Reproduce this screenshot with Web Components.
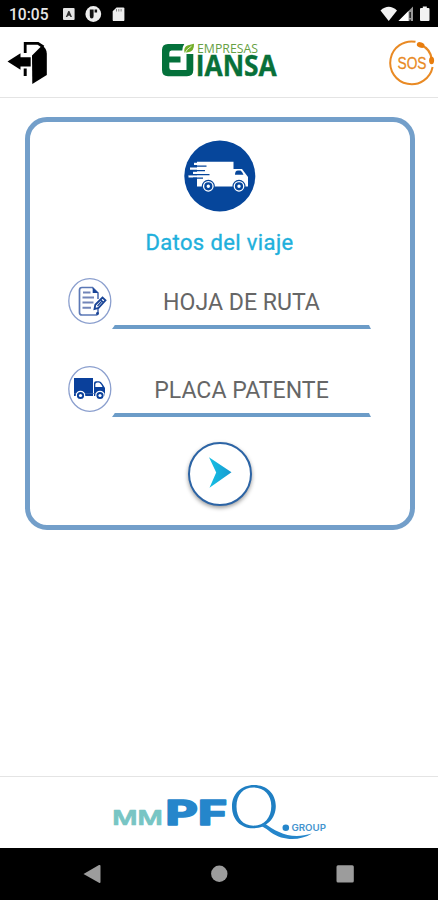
<!DOCTYPE html>
<html lang="es">
<head>
<meta charset="utf-8">
<title>Datos del viaje</title>
<style>
html,body{margin:0;height:100%;background:#fff;font-family:Roboto,sans-serif}
</style>
</head>
<body>
<trip-app></trip-app>
<script>
const define = (name, markup) => {
  const t = document.createElement('template');
  t.innerHTML = markup;
  customElements.define(name, class extends HTMLElement {
    constructor() {
      super();
      this.attachShadow({ mode: 'open' }).append(t.content.cloneNode(true));
    }
  });
};

define('status-bar', `
<style>
:host{display:flex;align-items:center;height:27px;background:#000;color:#e6e6e6;flex:none;box-sizing:border-box;padding:0 7px 0 5px}
svg{display:block}
.clock{flex:none}
.right{margin-left:auto}
</style>
<svg class="clock" width="48" height="27" viewBox="5 0 48 27"><text x="9" y="20.3" font-size="16.5" textLength="39.5" lengthAdjust="spacingAndGlyphs" fill="#e6e6e6" font-weight="500">10:05</text></svg>
<svg width="80" height="27" viewBox="53 0 80 27">
  <rect x="63" y="8" width="11.6" height="12" rx="1" fill="#e4e4e4"/>
  <path d="M65.8 17 68.3 11h1.1L72 17h-1.6l-.5-1.3h-2L67.3 17Z" fill="#333"/>
  <circle cx="93.3" cy="14" r="7.9" fill="#eee"/>
  <path d="M89.8 9.5h3.8v6.5q0 2.5-1.9 2.5t-1.9-2.5Z" fill="#111"/>
  <path d="M94.6 9.5h2.5v3h-2.5Z" fill="#111"/>
  <path d="M116.5 7.4h6.700q1.200 0 1.200 1.200v11.300q0 1.200-1.200 1.200h-9.300q-1.200 0-1.200-1.200v-8.700Z" fill="#eee"/>
  <path d="M116.500 9v2.500M118.800 9v2.500M121.100 9v2.500" stroke="#777" stroke-width=".9"/>
</svg>
<svg class="right" width="54" height="27" viewBox="377 0 54 27">
  <path d="M380.500 10.500Q388.700 3 397 10.500L388.700 21Z" fill="#f2f2f2"/>
  <path d="M413 6.500V21H398.500Z" fill="#999"/>
  <path d="M408.500 11v10h-10Z" fill="#fff"/><path d="M410.200 12v6M410.200 19.500v1.500" stroke="#222" stroke-width="1.500"/>
  <path d="M421 8h1.800V6.500h4V8h1.700q1 0 1 1v11q0 1-1 1H421q-1 0-1-1V9q0-1 1-1Z" fill="#f2f2f2"/>
</svg>`);

define('app-header', `
<style>
:host{display:flex;height:71px;flex:none;box-sizing:border-box;border-bottom:1px solid #e4e4e4;background:#fff;justify-content:space-between}
svg{display:block}
</style>
<svg width="60" height="70" viewBox="0 27 60 70">
  <path d="M25.200 53V43.400H38L43.500 47" fill="none" stroke="#000" stroke-width="2.800"/>
  <path d="M25.200 68.500V76" stroke="#000" stroke-width="3"/>
  <path d="M7.500 61.500 20.500 53.300V57.200H30.700V66.500H20.500V69.800Z"/>
  <path d="M32 55.500 42 45.500Q46.500 48 46.800 53.500V75L32.300 84Z"/>
</svg>
<svg width="130" height="70" viewBox="154 27 130 70">
  <path d="M184.300 44H168Q162 44 162 50V70Q162 76.200 168 76.200H187Q193.300 76.200 193.300 70V54H186.500V70H171.500Q169.300 70 169.300 67.500V62.500H180.500V56.500H169.300V53Q169.300 50.400 171.500 50.400H182.300Q182.500 46.500 184.300 44Z" fill="#04713b"/>
  <path d="M184.500 52.800Q183.200 47 188 45.300L194 43.800Q194.400 52 188 52.200Z" fill="#72ae28"/><path d="M184.300 54Q187 48.500 191.500 46.200" fill="none" stroke="#fff" stroke-width=".8"/>
  <text x="197" y="52.500" font-family="Open Sans,Noto Sans,sans-serif" font-size="11.800" textLength="61" lengthAdjust="spacingAndGlyphs" fill="#66a043">EMPRESAS</text>
  <text x="195.800" y="76" font-family="Open Sans,Noto Sans,sans-serif" font-weight="700" font-size="28" textLength="81" lengthAdjust="spacingAndGlyphs" fill="#087039" stroke="#087039" stroke-width=".4">IANSA</text>
</svg>
<svg width="60" height="70" viewBox="378 27 60 70">
  <path d="M415.500 41.800A21.400 21.400 0 1 0 432.600 67" fill="none" stroke="#e98a24" stroke-width="2"/>
  <path d="M421.500 45.200Q430.500 49 431.800 59.500" fill="none" stroke="#e98a24" stroke-width="2.300"/>
  <ellipse cx="420.700" cy="45" rx="4" ry="2.600" transform="rotate(20 420.700 45)" fill="#e87d0e"/>
  <ellipse cx="431.600" cy="60.500" rx="2.500" ry="3.700" fill="#e87d0e"/>
  <text x="397.500" y="69" font-family="Liberation Sans,sans-serif" font-size="16.800" textLength="29" lengthAdjust="spacingAndGlyphs" fill="#e98a24" stroke="#e98a24" stroke-width=".3">SOS</text>
</svg>`);

define('trip-field', `
<style>
:host{display:grid;grid-template-columns:44px 259px;height:53px}
.line{box-sizing:border-box;height:51.500px;border-bottom:4px solid #6c9cc8;clip-path:polygon(0 0,100% 0,99.300% 93%,100% 100%,0 100%,1% 93%);color:#666;font-size:23.100px;line-height:49px;text-align:center;white-space:nowrap}
</style>
<slot name="icon"></slot>
<div class="line"><slot></slot></div>`);

define('go-button', `
<style>
:host{display:block;width:64px;height:64px;box-sizing:border-box;border:2.200px solid #2c64a5;border-radius:50%;background:#fff;box-shadow:0 2px 4px #0006}
svg{display:block}
</style>
<svg width="60" height="60" viewBox="189.500 444.200 60 60"><defs><linearGradient id="a"><stop stop-color="#16c0e4"/><stop offset="1" stop-color="#1799d0"/></linearGradient></defs><path d="M208.500 457.500 231 472.500 209 488 215.700 472.800Z" fill="url(#a)"/></svg>`);

define('trip-card', `
<style>
:host{display:flex;flex-direction:column;align-items:center;box-sizing:border-box;width:390px;height:413px;margin:18.500px 0 0 24.500px;border:5.500px solid #739fca;border-radius:22px;background:#fff;padding-top:18.500px;flex:none}
svg{display:block}
h1{margin:14.500px 0 0;font-size:22px;line-height:32px;font-weight:400;color:#1fb0dc;letter-spacing:.38px;-webkit-text-stroke:.35px #1fb0dc}
trip-field{margin-top:19px}
.two{margin-top:35px}
go-button{margin-top:23px}
</style>
<svg width="72" height="72" viewBox="184 140 72 72">
  <circle cx="219.800" cy="176" r="35.500" fill="#06469b"/>
  <path d="M199 161.800H233.500V169H242L248 177V186.600H197V161.800Z" fill="#fff"/>
  <path d="M194 163.800H208M190 168.600H205M193 172.800H207M188.500 176.400H202" stroke="#fff" stroke-width="2.300"/>
  <path d="M193 166.200H206.500M191 170.700H205M189 174.700H209.500M193 178.200H203" stroke="#06469b" stroke-width="1.300"/>
  <path d="M235 174.800Q235 170.500 238 170.500H240.500Q242 171.500 243.500 174.800Z" fill="#06469b"/>
  <g fill="#fff" stroke="#06469b" stroke-width="1.200"><circle cx="208.300" cy="186.300" r="6"/><circle cx="239" cy="186.300" r="6"/></g>
  <g fill="#fff" stroke="#06469b" stroke-width="2.400"><circle cx="208.300" cy="186.300" r="2.900"/><circle cx="239" cy="186.300" r="2.900"/></g>
</svg>
<h1>Datos del viaje</h1>
<trip-field>
<svg slot="icon" width="44" height="46" viewBox="68 278 44 46">
  <ellipse cx="89.800" cy="301" rx="21" ry="22.300" fill="#fff" stroke="#8b9fce" stroke-width="1.300"/>
  <path d="M98 306.500V312.500Q98 315 95.500 315H82Q79.500 315 79.500 312.500V290Q79.500 287.500 82 287.500H92.500L98 293V299" fill="none" stroke="#5b78b6" stroke-width="1.700"/>
  <path d="M92.700 287.500V293H98.500Z" fill="#194496"/>
  <path d="M83 292.500H90.500M82.500 297.500H94M82.500 302.500H93.500M82.500 307.700H91" stroke="#7285b8" stroke-width="1.900"/>
  <path d="M94.500 309 95.300 304.800 102.500 297.500 105.500 300.300 98.500 307.900Z" fill="#fff" stroke="#194496" stroke-width="1.800"/>
  <path d="M100.500 299.500 103.500 302.500M97.500 306 102 301" stroke="#194496" stroke-width="1.200"/>
  <circle cx="97.500" cy="313.500" r="1.400" fill="#194496"/>
</svg>HOJA DE RUTA</trip-field>
<trip-field class="two">
<svg slot="icon" width="44" height="46" viewBox="68 366 44 46">
  <ellipse cx="89.800" cy="389" rx="21" ry="22.300" fill="#fff" stroke="#8b9fce" stroke-width="1.300"/>
  <path d="M74 378H93V396H74Z" fill="#0a409b"/>
  <path d="M94 396V383Q94 381.300 96 381.300H99Q101 381.300 102.500 384L105 388V396Z" fill="#0a409b"/>
  <path d="M95.300 387V384.500Q95.300 382.500 97.500 382.500H98.500Q100.500 382.500 102.500 387Z" fill="#fff"/>
  <path d="M74 393.500H105" stroke="#4a70b2" stroke-width=".6"/>
  <g fill="#0a409b" stroke="#fff" stroke-width="1.200"><circle cx="80.500" cy="395.500" r="4.200"/><circle cx="100" cy="395.500" r="4.200"/></g>
  <g fill="#fff"><circle cx="80.500" cy="395.500" r="1.600"/><circle cx="100" cy="395.500" r="1.600"/></g>
</svg>PLACA PATENTE</trip-field>
<go-button role="button"></go-button>`);

define('app-footer', `
<style>
:host{display:flex;justify-content:center;height:72px;flex:none;box-sizing:border-box;border-top:1px solid #e4e4e4;background:#fff}
svg{display:block}
</style>
<svg width="238" height="71" viewBox="100 777 238 71">
  <text x="112.300" y="825" font-family="Inter,sans-serif" font-weight="600" font-size="20.500" textLength="50.500" lengthAdjust="spacingAndGlyphs" fill="#78c5c4" stroke="#78c5c4" stroke-width=".7" stroke-linejoin="round">MM</text>
  <text x="165.500" y="825.200" font-family="Inter,sans-serif" font-weight="800" font-size="34" textLength="61.500" lengthAdjust="spacingAndGlyphs" fill="#2586cb" stroke="#2586cb" stroke-width="1.300" stroke-linejoin="round">PF</text>
  <path fill-rule="evenodd" fill="#1f7fc3" d="M254 785C266.500 785 275.800 793.500 275.800 806C275.800 819 266 828.300 253 828.300C240.500 828.300 232 819.500 232 806.500C232 794 241 785 254 785ZM253.500 787.500C243.500 787.500 236.500 794.500 236.500 806.500C236.500 818 243 825.700 253.500 825.700C264 825.700 271.300 818 271.300 806C271.300 795 264 787.500 253.500 787.500Z"/>
  <path d="M260.500 825.500 264 823C277 832.500 291 840 312 833.500C300 841 283 841 271 832.500Q265.500 828 260.500 825.500Z" fill="#2586cb"/>
  <circle cx="285.800" cy="827.800" r="3.300" fill="#2586cb"/>
  <text x="291.500" y="831" font-family="Inter,sans-serif" font-weight="600" font-size="8.800" textLength="34.500" lengthAdjust="spacingAndGlyphs" fill="#4594ce">GROUP</text>
</svg>`);

define('nav-bar', `
<style>
:host{display:flex;justify-content:center;height:52px;flex:none;background:#000}
svg{display:block}
</style>
<svg width="438" height="52" viewBox="0 848 438 52" fill="#9c9c9c"><path d="M83.500 874 99 865Q100.500 864.500 100.500 866V882Q100.500 883.500 99 882.800Z"/><circle cx="219.300" cy="873.800" r="8.200"/><rect x="336.500" y="865.300" width="17.300" height="17.300" rx="1.500"/></svg>`);

define('trip-app', `
<style>
:host{display:flex;flex-direction:column;height:900px;overflow:hidden}
main{flex:1;min-height:0;display:flex;flex-direction:column;align-items:flex-start}
</style>
<status-bar></status-bar>
<app-header></app-header>
<main><trip-card></trip-card></main>
<app-footer></app-footer>
<nav-bar></nav-bar>`);
</script>
</body>
</html>
